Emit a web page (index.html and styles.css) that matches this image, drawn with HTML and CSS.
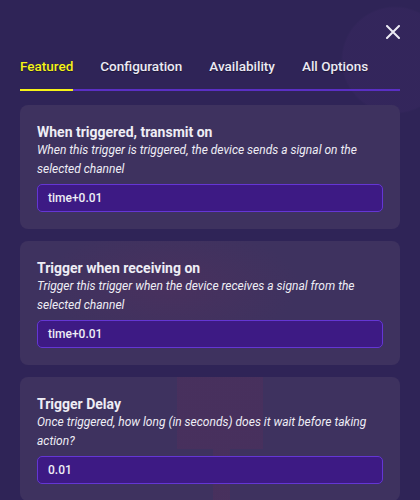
FILE: index.html
```html
<!DOCTYPE html>
<html lang="en">
<head>
    <meta charset="UTF-8">
    <meta name="viewport" content="width=device-width, initial-scale=1.0">
    <title>Trigger Options</title>
    <link rel="stylesheet" href="styles.css">
</head>
<body>
    <div class="panel">
        <div class="top-bar">
            <button class="close-btn" aria-label="Close">
                <svg width="14" height="14" viewBox="0 0 14 14">
                    <path d="M1 1 L13 13 M13 1 L1 13" stroke="#ecebf4" stroke-width="2" stroke-linecap="round"/>
                </svg>
            </button>
        </div>

        <div class="tabs">
            <div class="tab active">Featured</div>
            <div class="tab">Configuration</div>
            <div class="tab">Availability</div>
            <div class="tab">All Options</div>
        </div>

        <div class="options">
            <div class="option-card">
                <div class="option-title">When triggered, transmit on</div>
                <div class="option-desc">When this trigger is triggered, the device sends a signal on the selected channel</div>
                <div class="option-input">time+0.01</div>
            </div>

            <div class="option-card tint-left">
                <div class="option-title">Trigger when receiving on</div>
                <div class="option-desc">Trigger this trigger when the device receives a signal from the selected channel</div>
                <div class="option-input">time+0.01</div>
            </div>

            <div class="option-card tint-middle">
                <div class="option-title">Trigger Delay</div>
                <div class="option-desc">Once triggered, how long (in seconds) does it wait before taking action?</div>
                <div class="option-input">0.01</div>
            </div>
        </div>
    </div>
</body>
</html>
```

FILE: styles.css
```css
body {
    margin: 0;
    font-family: Roboto, "Noto Sans", sans-serif;
    background-color: #2f2457;
    color: #eeedf5;
    overflow: hidden;
}
.panel {
    height: 500px;
    padding: 0 20px;
    background:
        radial-gradient(circle at 395px 60px, rgba(56, 40, 96, 0.5) 0, rgba(56, 40, 96, 0.5) 52px, transparent 54px),
        #2f2457;
}
.top-bar {
    display: flex;
    justify-content: flex-end;
    padding-top: 25px;
    height: 14px;
}
.close-btn {
    background: none;
    border: none;
    padding: 0;
    width: 14px;
    height: 14px;
    cursor: pointer;
}
.tabs {
    display: flex;
    gap: 27px;
    margin-top: 18px;
    border-bottom: 2px solid #5a2fc4;
}
.tab {
    font-size: 13.5px;
    font-weight: 500;
    line-height: 18px;
    padding-bottom: 14px;
    margin-bottom: -2px;
    border-bottom: 2px solid transparent;
    color: #eceaf4;
    text-shadow: 0 1px 1px rgba(0, 0, 0, 0.4);
}
.tab.active {
    color: #f5f218;
    border-bottom-color: #f5f218;
}
.options {
    display: flex;
    flex-direction: column;
    gap: 12px;
    margin-top: 14px;
}
.option-card {
    background-color: #3e325f;
    border-radius: 8px;
    padding: 18px 17px 17px;
}
.tint-left {
    background:
        radial-gradient(ellipse 130px 60px at 150px 45px, rgba(110, 45, 90, 0.22), transparent),
        #3e325f;
}
.tint-middle {
    background:
        linear-gradient(rgba(115, 40, 85, 0.18), rgba(115, 40, 85, 0.18)) 157px 0 / 86px 72px no-repeat,
        linear-gradient(rgba(115, 40, 85, 0.18), rgba(115, 40, 85, 0.18)) 193px 72px / 17px 60px no-repeat,
        #3e325f;
}
.option-title {
    font-size: 14px;
    font-weight: 700;
    line-height: 18px;
}
.option-desc {
    font-size: 12px;
    font-style: italic;
    line-height: 19px;
}
.option-input {
    margin-top: 5px;
    height: 26px;
    line-height: 26px;
    padding: 0 10px;
    font-size: 12px;
    font-weight: 500;
    background-color: #3d1a84;
    border: 1px solid #6436d4;
    border-radius: 5px;
}
```
